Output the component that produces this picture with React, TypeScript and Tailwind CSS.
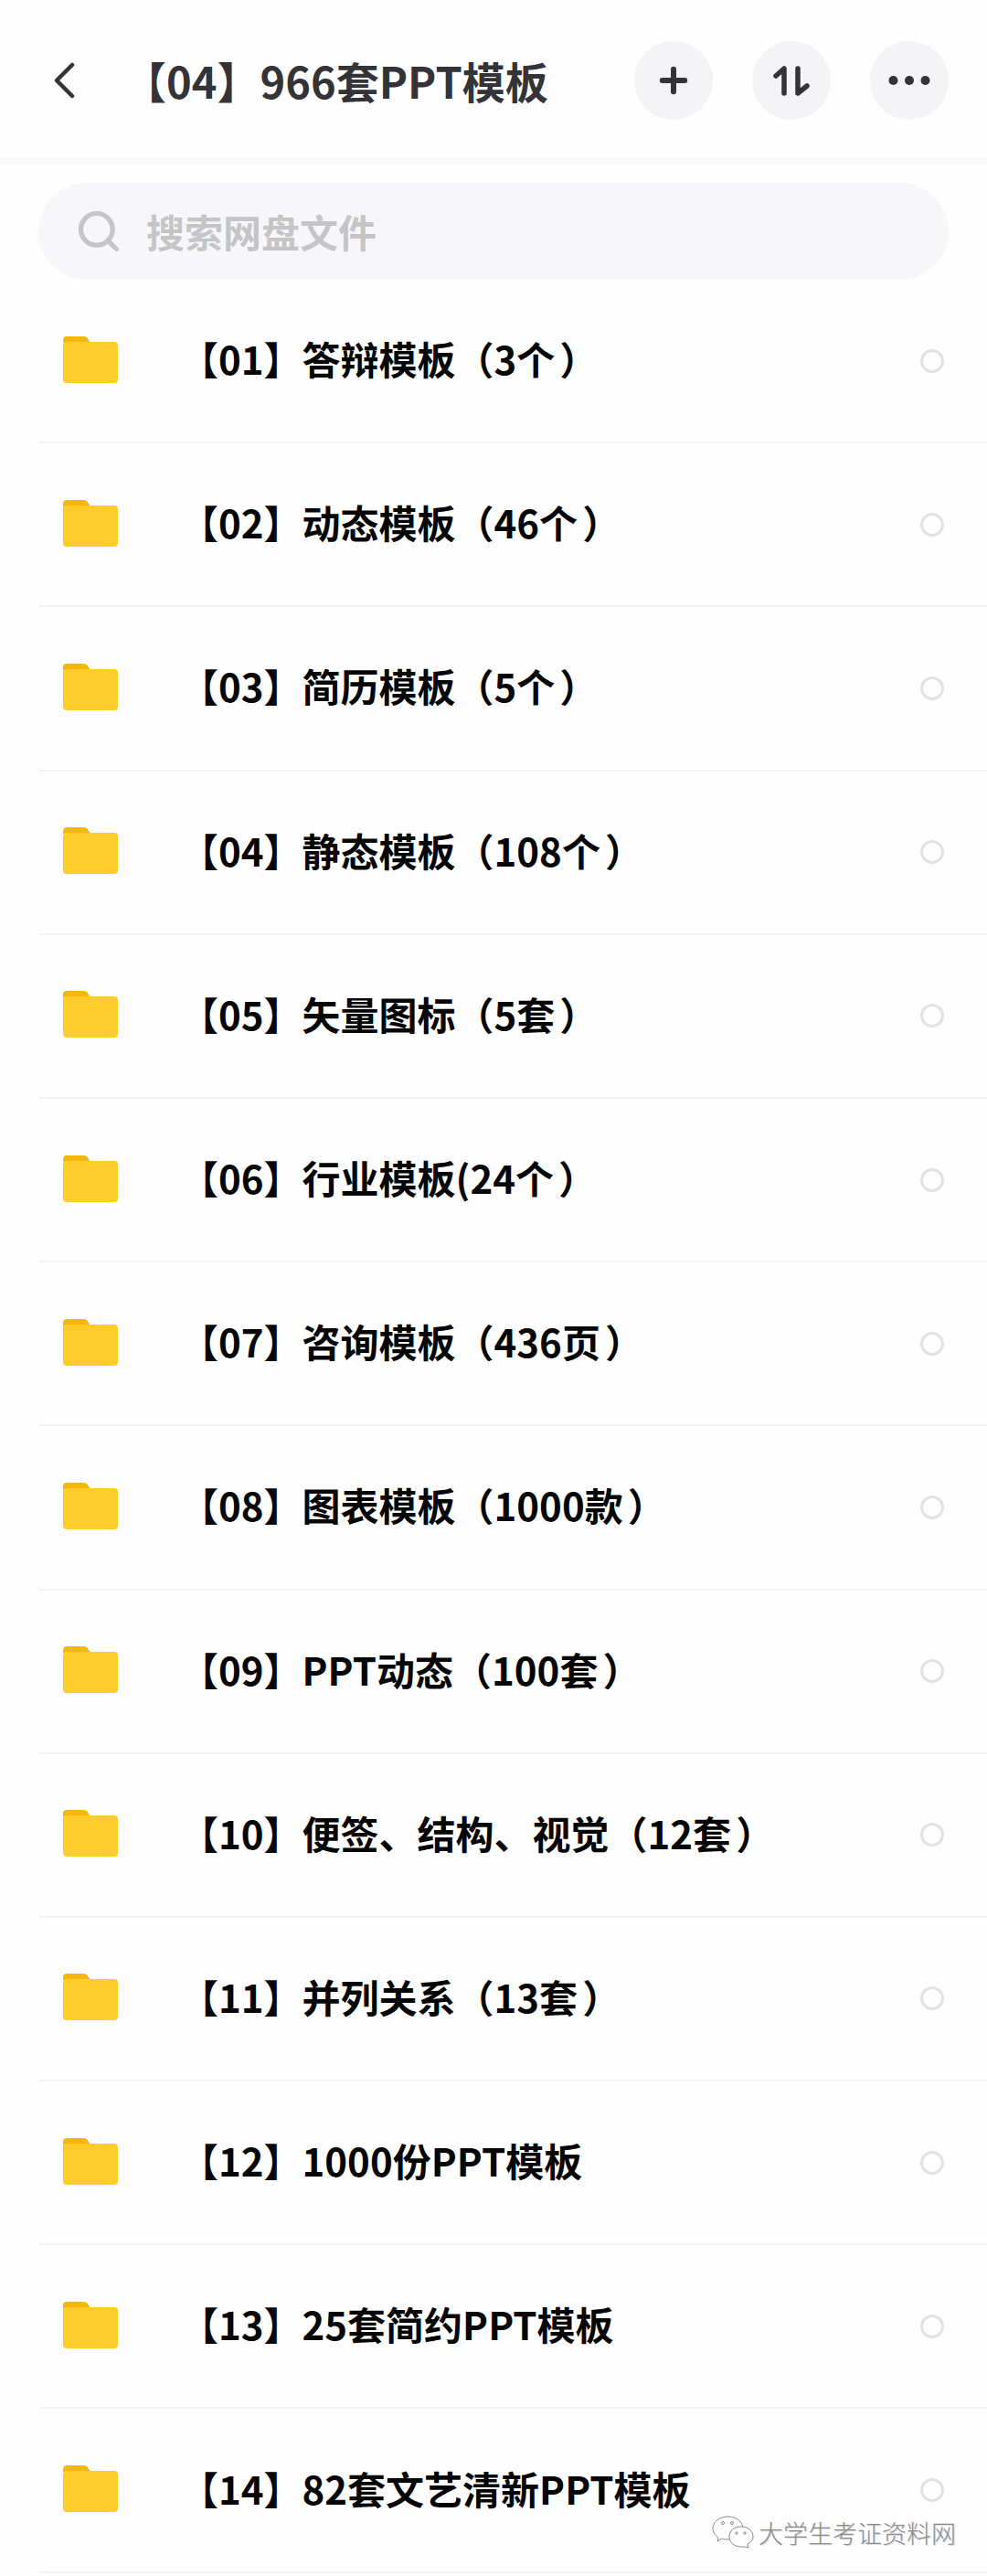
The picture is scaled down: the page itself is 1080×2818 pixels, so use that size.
import { Plus, Search } from "lucide-react";

const folders = [
  "【01】答辩模板（3个）",
  "【02】动态模板（46个）",
  "【03】简历模板（5个）",
  "【04】静态模板（108个）",
  "【05】矢量图标（5套）",
  "【06】行业模板(24个）",
  "【07】咨询模板（436页）",
  "【08】图表模板（1000款）",
  "【09】PPT动态（100套）",
  "【10】便签、结构、视觉（12套）",
  "【11】并列关系（13套）",
  "【12】1000份PPT模板",
  "【13】25套简约PPT模板",
  "【14】82套文艺清新PPT模板",
];

const FolderIcon = () => (
  <svg width="60" height="52" viewBox="0 0 60 52" className="shrink-0">
    <path d="M0 5a4 4 0 0 1 4-4h18a7 7 0 0 1 6 4l2 3H0z" fill="#f5b60d" />
    <rect x="0" y="7" width="60" height="45" rx="4" fill="#ffcc2c" />
  </svg>
);

const BackIcon = () => (
  <svg width="24" height="40" viewBox="0 0 24 40" fill="none" stroke="#333338" strokeWidth="4.5" strokeLinecap="round" strokeLinejoin="round" className="shrink-0">
    <path d="M21 3 L4 20 L21 37" />
  </svg>
);

const SortIcon = () => (
  <svg width="40" height="33" viewBox="0 0 40 33" fill="none" stroke="#333338" strokeWidth="5.5" strokeLinecap="round" strokeLinejoin="round">
    <path d="M3 11 L12 3 V30" />
    <path d="M27 3 V30 L37 22" />
  </svg>
);

const DotsIcon = () => (
  <svg width="46" height="12" viewBox="0 0 46 12" fill="#333338">
    <circle cx="5.5" cy="6" r="5" />
    <circle cx="23" cy="6" r="5" />
    <circle cx="40.5" cy="6" r="5" />
  </svg>
);

const WeChatMark = () => (
  <svg width="46" height="36" viewBox="0 0 46 36" fill="#fff" stroke="#8a8a8a" strokeWidth="1">
    <path d="M18 1C8 1 1 7 1 14c0 4 2 7 6 10l-1 4 5-3c2 1 4 1 7 1 10 0 16-6 16-12S28 1 18 1z" />
    <path d="M32 12c-8 0-13 5-13 11s5 11 13 11c2 0 3 0 4 0l4 1-1-4c4-2 6-5 6-8 0-6-5-11-13-11z" />
    <circle cx="12" cy="8" r="1.5" />
    <circle cx="22" cy="8" r="1.5" />
    <circle cx="27" cy="19" r="1.2" />
    <circle cx="36" cy="19" r="1.2" />
  </svg>
);

const IconButton = ({ children }: { children: React.ReactNode }) => (
  <div className="flex h-[86px] w-[86px] items-center justify-center rounded-full bg-[#f4f3f6]">
    {children}
  </div>
);

// the closing paren sits further from the text in the screenshot
const FolderName = ({ name }: { name: string }) => (
  <>
    {name.split(/(）)/).map((part, i) =>
      part === "）" ? (
        <span key={i} className="ml-[5px]">{part}</span>
      ) : (
        part
      ),
    )}
  </>
);

export default function App() {
  return (
    <div className="relative h-[2818px] w-[1080px] overflow-hidden bg-[#fefefe] font-['Noto_Sans_CJK_SC',sans-serif]">
      <header className="flex h-[180px] items-center border-b-[8px] border-[#f9f9fa] pl-[58px] pr-[42px] pt-[4px]">
        <BackIcon />
        <h1 className="ml-[53px] flex-1 pb-[2px] text-[47px] font-bold leading-none text-[#333338]">
          【04】966套PPT模板
        </h1>
        <div className="flex gap-[43px]">
          <IconButton>
            <Plus size={42} strokeWidth={3.4} className="text-[#333338]" />
          </IconButton>
          <IconButton>
            <SortIcon />
          </IconButton>
          <IconButton>
            <DotsIcon />
          </IconButton>
        </div>
      </header>

      <div className="mx-[42px] mt-[20px] flex h-[106px] items-center rounded-full bg-[#f7f7f9] pl-[40px]">
        <Search size={52} strokeWidth={2.4} className="shrink-0 text-[#c5c5c7]" />
        <span className="ml-[26px] text-[42px] font-bold leading-none text-[#c5c5c7]">搜索网盘文件</span>
      </div>

      <ul className="ml-[42px]">
        {folders.map((name) => (
          <li key={name} className="flex h-[179.2px] items-center border-b-2 border-[#f3f3f4] pl-[27px] pr-[47px]">
            <div className="-translate-y-[2px]">
              <FolderIcon />
            </div>
            <span className="ml-[68px] flex-1 pb-[5px] text-[42px] font-bold leading-none text-[#050505]">
              <FolderName name={name} />
            </span>
            <span className="h-[26px] w-[26px] rounded-full border-[3px] border-[#e2e2e2]" />
          </li>
        ))}
      </ul>

      <div className="absolute left-[779px] top-[2752px] flex items-center gap-[5px]">
        <WeChatMark />
        <span className="text-[27px] font-light leading-none text-[#8c8c8c] [text-shadow:1px_1px_0_#ddd]">
          大学生考证资料网
        </span>
      </div>
    </div>
  );
}
